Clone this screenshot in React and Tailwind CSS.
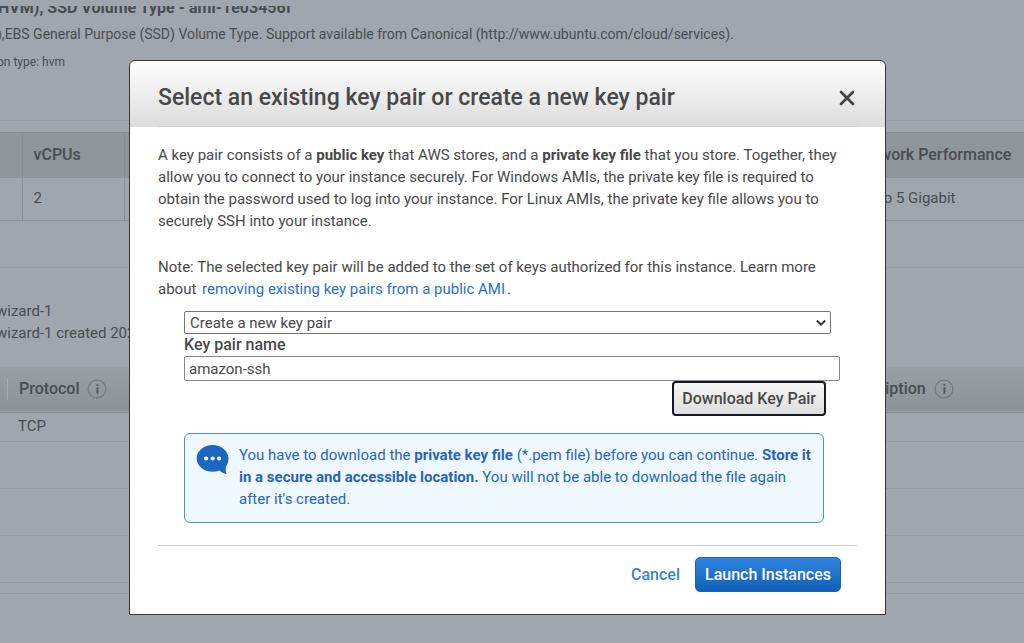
function InfoIcon() {
  return (
    <svg className="size-5 shrink-0" viewBox="0 0 20 20" fill="none" aria-hidden="true">
      <circle cx="10" cy="10" r="8.9" stroke="#747b81" strokeWidth="1.2" />
      <circle cx="10.4" cy="6" r="1.1" fill="#52595e" />
      <path d="M10.4 8.3v6.4" stroke="#52595e" strokeWidth="1.9" />
    </svg>
  );
}

function LaunchReview() {
  return (
    <main className="text-[#484d52]">
      <section className="h-[121px] border-b border-[#939aa0] pt-[6px]">
        <div className="h-[14px] overflow-hidden">
          <h2 className="-mt-2 -ml-[2px] whitespace-nowrap text-base leading-5 font-bold">
            HVM), SSD Volume Type - ami-1e03456f
          </h2>
        </div>
        <p className="mt-1 -ml-[3px] whitespace-nowrap text-sm leading-5">
          ),EBS General Purpose (SSD) Volume Type. Support available from Canonical
          (http://www.ubuntu.com/cloud/services).
        </p>
        <p className="mt-2 -ml-[3px] text-xs leading-5">on type: hvm</p>
      </section>

      <table className="mt-[11px] w-full table-fixed border-collapse text-left text-[15px]">
        <thead>
          <tr className="h-[45px] border-t border-[#858c92] bg-[#8e959b] text-base">
            <th className="w-[22px]" />
            <th className="w-[102px] border-x border-[#858c92] pl-[11px] font-medium">vCPUs</th>
            <th />
            <th className="w-[170px] pl-0 font-medium whitespace-nowrap">Network Performance</th>
          </tr>
        </thead>
        <tbody>
          <tr className="h-[43px] border-b border-[#8a9197]">
            <td />
            <td className="border-x border-[#8a9197] pl-[11px] pb-[2px]">2</td>
            <td />
            <td className="pb-[2px] pl-[3px]">Up to 5 Gigabit</td>
          </tr>
        </tbody>
      </table>

      <section className="mt-[46px] border-t border-[#939aa0] pt-8 pb-[23px]">
        <p className="-ml-1 text-[15px] leading-[22px]">wizard-1</p>
        <p className="-ml-1 text-[15px] leading-[22px]">wizard-1 created 2021</p>
      </section>

      <table className="w-full table-fixed border-collapse text-left text-[15px]">
        <thead>
          <tr className="h-[45px] border-b border-[#858c92] bg-linear-to-b from-[#98a0a5] to-[#8b9298] text-base">
            <th className="pl-[7px] font-medium">
              <span className="flex h-[22px] items-center gap-2 border-l border-[#a5acb2] pl-[11px]">
                Protocol
                <InfoIcon />
              </span>
            </th>
            <th className="w-[180px] font-medium">
              <span className="flex items-center gap-2">
                Description
                <InfoIcon />
              </span>
            </th>
          </tr>
        </thead>
        <tbody>
          <tr className="h-[29px] border-b border-[#939aa0]">
            <td className="pl-[18px]">TCP</td>
            <td />
          </tr>
          <tr className="h-[47px] border-b border-[#939aa0]"><td colSpan={2} /></tr>
          <tr className="h-[47px] border-b border-[#939aa0]"><td colSpan={2} /></tr>
          <tr className="h-[47px] border-b border-[#939aa0]"><td colSpan={2} /></tr>
          <tr className="h-[11px] border-b border-[#939aa0]"><td colSpan={2} /></tr>
        </tbody>
      </table>
    </main>
  );
}

function KeyPairDialog() {
  return (
    <div
      role="dialog"
      aria-modal="true"
      aria-labelledby="dialog-title"
      className="w-full max-w-[757px] self-start rounded-t-md border border-[#33373a] bg-white text-[15px] text-[#484848]"
    >
      <header className="rounded-t-md bg-linear-to-b from-white to-[#dcdcdc] px-7">
        <div className="flex h-[66px] items-center justify-between border-b border-[#cfcfcf] pt-2">
          <h1 id="dialog-title" className="text-[23px] leading-7 font-medium">
            Select an existing key pair or create a new key pair
          </h1>
          <button type="button" aria-label="Close" className="mr-[2px] p-0">
            <svg className="size-4" viewBox="0 0 16 16" fill="none" aria-hidden="true">
              <path d="M2 2l12 12M14 2L2 14" stroke="#444" strokeWidth="2.7" strokeLinecap="round" />
            </svg>
          </button>
        </div>
      </header>

      <div className="px-7 pt-[17px] pb-[22px]">
        <p className="pr-3 leading-[22px]">
          A key pair consists of a <b className="font-bold">public key</b> that AWS stores, and a{" "}
          <b className="font-bold">private key file</b> that you store. Together, they allow you to
          connect to your instance securely. For Windows AMIs, the private key file is required to
          obtain the password used to log into your instance. For Linux AMIs, the private key file
          allows you to securely SSH into your instance.
        </p>
        <p className="mt-6 pr-3 leading-[22px]">
          Note: The selected key pair will be added to the set of keys authorized for this instance.
          Learn more about{" "}
          <a href="#remove" className="px-0.5 text-[#2a6fc9]">
            removing existing key pairs from a public AMI
          </a>
          .
        </p>

        <form className="mt-[11px] mr-[17px] ml-[26px]">
          <div className="relative mr-[9px]">
            <select
              aria-label="Key pair option"
              className="block h-[23px] w-full appearance-none rounded-xs border border-[#767676] bg-white pl-[5px] leading-5"
            >
              <option>Create a new key pair</option>
            </select>
            <svg
              className="pointer-events-none absolute top-2 right-[5px] h-2 w-2.5"
              viewBox="0 0 10 8"
              fill="none"
              aria-hidden="true"
            >
              <path d="M0.8 1.5L5 5.7L9.2 1.5" stroke="#333" strokeWidth="1.9" />
            </svg>
          </div>
          <label htmlFor="key-name" className="block text-base leading-[22px] font-medium">
            Key pair name
          </label>
          <input
            id="key-name"
            defaultValue="amazon-ssh"
            className="block h-[25px] w-full rounded-xs border border-[#8a8a8a] px-1"
          />
          <div className="mr-[14px] flex justify-end">
            <button
              type="button"
              className="h-[35px] rounded-sm border-2 border-[#16191f] bg-linear-to-b from-[#f6f6f6] to-[#dedede] px-2 text-base font-medium"
            >
              Download Key Pair
            </button>
          </div>
          <div className="mt-[17px] mr-4 flex gap-[10px] rounded-md border border-[#4a94d0] bg-[#eff8ff] pt-[10px] pr-1 pb-3 pl-[11px] text-[#2566b8]">
            <svg className="h-[31px] w-[33px] shrink-0" viewBox="0 0 33 31" aria-hidden="true">
              <path
                d="M16.5 1C7.8 1 .6 7 .6 14.3S7.8 27.8 16.5 27.8c2.6 0 5-.4 7.1-1.2 1.7 1.6 4.3 3.2 7.2 3.6-1-2-1.3-4.6-1-7.3 1.7-2.3 2.7-5.3 2.7-8.6C32.5 7 25.2 1 16.5 1z"
                fill="#1a66c0"
              />
              <circle cx="10.1" cy="14.5" r="2.1" fill="#fff" />
              <circle cx="16.6" cy="14.5" r="2.1" fill="#fff" />
              <circle cx="23.1" cy="14.5" r="2.1" fill="#fff" />
            </svg>
            <p className="leading-[22px]">
              You have to download the <b className="font-bold">private key file</b> (*.pem file)
              before you can continue.{" "}
              <b className="font-bold">Store it in a secure and accessible location.</b> You will
              not be able to download the file again after it's created.
            </p>
          </div>
        </form>
      </div>

      <footer className="px-7">
        <div className="flex items-center justify-end gap-[15px] border-t border-[#ccc] pt-[11px] pr-4 pb-[22px]">
          <button type="button" className="text-base font-medium text-[#3a80d8]">
            Cancel
          </button>
          <button
            type="button"
            className="h-[35px] rounded-[5px] border border-[#1a62b5] bg-linear-to-b from-[#2f84dc] to-[#1160b8] px-[9px] text-base font-medium text-white"
          >
            Launch Instances
          </button>
        </div>
      </footer>
    </div>
  );
}

export default function App() {
  return (
    <div className="relative min-h-screen overflow-hidden bg-[#a0a6ad] font-[Roboto,sans-serif]">
      <LaunchReview />
      <div className="absolute inset-0 flex justify-center pt-[60px] pr-[9px]">
        <KeyPairDialog />
      </div>
    </div>
  );
}
